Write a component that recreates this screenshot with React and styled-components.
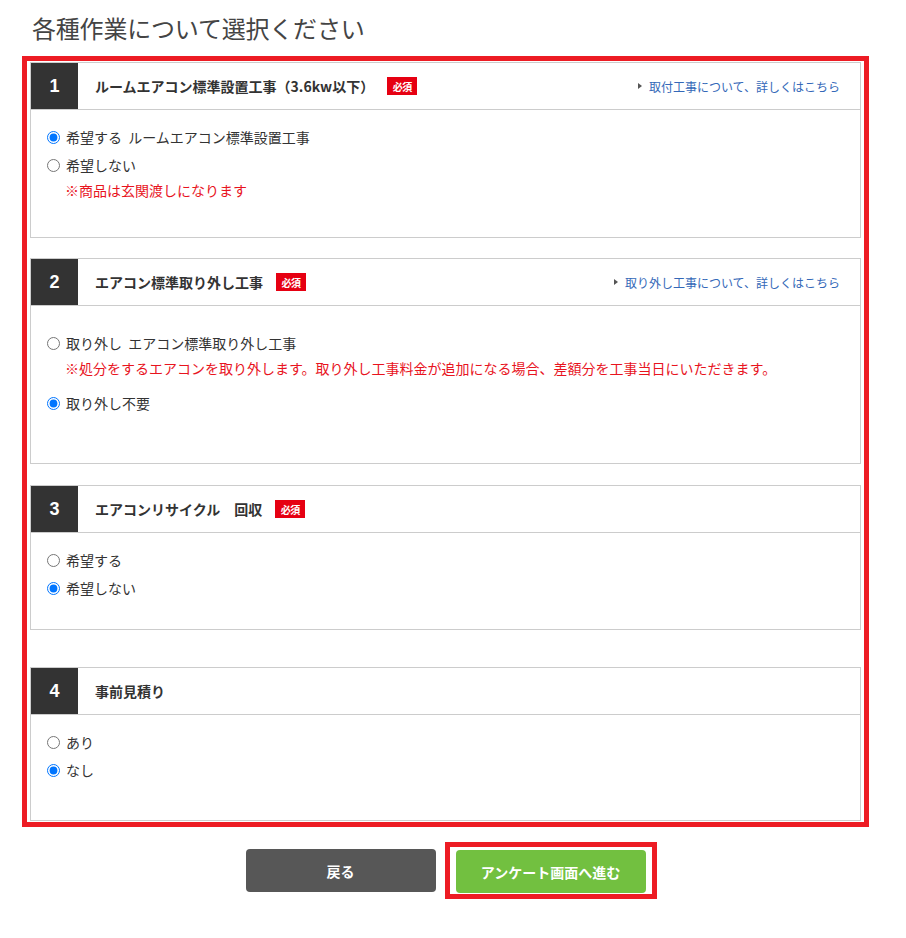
import React from "react";
import styled, { createGlobalStyle } from "styled-components";

const GlobalStyle = createGlobalStyle`
  html, body { margin: 0; padding: 0; background: #fff; }
  body {
    font-family: "Noto Sans CJK JP", "Noto Sans", sans-serif;
    color: #333;
  }
`;

const Page = styled.div`
  width: 906px;
  padding: 12px 0 20px;
  box-sizing: border-box;
`;

const Title = styled.h1`
  margin: 0 0 12px 32px;
  font-size: 24px;
  line-height: 32px;
  font-weight: 400;
  color: #444;
  letter-spacing: -0.2px;
`;

const Highlight = styled.div`
  margin-left: 22px;
  width: 847px;
  box-sizing: border-box;
  border: 5px solid #ed1c24;
  padding: 1px 3px 1px 3px;
`;

const Card = styled.section`
  border: 1px solid #ccc;
  margin-top: ${(p) => p.$mt}px;
  background: #fff;
`;

const Header = styled.div`
  display: flex;
  align-items: center;
  height: 46px;
  border-bottom: 1px solid #ccc;
`;

const Num = styled.div`
  width: 47px;
  height: 46px;
  background: #333;
  color: #fff;
  font-family: "Liberation Sans", Arial, sans-serif;
  font-weight: 700;
  font-size: 18px;
  display: flex;
  align-items: center;
  justify-content: center;
`;

const HeadTitle = styled.div`
  margin-left: 17px;
  font-size: 14px;
  font-weight: 700;
  color: #333;
  white-space: pre;
`;

const Badge = styled.span`
  margin-left: 13px;
  width: 30px;
  height: 18px;
  background: #e60012;
  color: #fff;
  font-size: 10px;
  font-weight: 700;
  display: inline-flex;
  align-items: center;
  justify-content: center;
  letter-spacing: -0.5px;
`;

const Link = styled.a`
  margin-left: auto;
  margin-right: 20px;
  display: flex;
  align-items: center;
  gap: 7px;
  font-size: 12px;
  color: #3468b8;
  text-decoration: none;
  &::before {
    content: "";
    width: 0;
    height: 0;
    border-top: 3px solid transparent;
    border-bottom: 3px solid transparent;
    border-left: 4px solid #555;
  }
`;

const Body = styled.div`
  padding: ${(p) => p.$pt}px 16px ${(p) => p.$pb}px;
`;

const Option = styled.label`
  display: flex;
  align-items: center;
  height: 28px;
  font-size: 14px;
  color: #333;
  white-space: pre;
`;

const Radio = styled.input`
  width: 13px;
  height: 13px;
  margin: 0 6px 0 0;
  accent-color: #0075ff;
`;

const Note = styled.div`
  padding-left: 18px;
  font-size: 14px;
  line-height: 22px;
  color: #e8141e;
  margin-bottom: 10px;
`;

const Actions = styled.div`
  margin-top: 15px;
  display: flex;
  justify-content: center;
  align-items: center;
  gap: 9px;
  padding-right: 4px;
`;

const Button = styled.button`
  width: 190px;
  height: 43px;
  border: none;
  border-radius: 4px;
  background: ${(p) => p.$bg};
  color: #fff;
  font-family: "Noto Sans CJK JP", sans-serif;
  font-size: 14px;
  font-weight: 700;
  cursor: pointer;
`;

const Outline = styled.div`
  border: 5px solid #ed1c24;
  padding: 3px 6px 1px 6px;
  display: flex;
`;

const cards = [
  {
    num: "1",
    title: "ルームエアコン標準設置工事（3.6kw以下）",
    required: true,
    link: "取付工事について、詳しくはこちら",
    mt: 0,
    pt: 13,
    pb: 26,
    options: [
      { label: "希望する  ルームエアコン標準設置工事", checked: true },
      { label: "希望しない", note: "※商品は玄関渡しになります" },
    ],
  },
  {
    num: "2",
    title: "エアコン標準取り外し工事",
    required: true,
    link: "取り外し工事について、詳しくはこちら",
    mt: 20,
    pt: 23,
    pb: 46,
    options: [
      {
        label: "取り外し  エアコン標準取り外し工事",
        note: "※処分をするエアコンを取り外します。取り外し工事料金が追加になる場合、差額分を工事当日にいただきます。",
      },
      { label: "取り外し不要", checked: true },
    ],
  },
  {
    num: "3",
    title: "エアコンリサイクル　回収",
    required: true,
    mt: 21,
    pt: 13,
    pb: 27,
    options: [{ label: "希望する" }, { label: "希望しない", checked: true }],
  },
  {
    num: "4",
    title: "事前見積り",
    mt: 37,
    pt: 13,
    pb: 36,
    options: [{ label: "あり" }, { label: "なし", checked: true }],
  },
];

export default function App() {
  return (
    <Page>
      <GlobalStyle />
      <Title>各種作業について選択ください</Title>
      <Highlight>
        {cards.map((c) => (
          <Card key={c.num} $mt={c.mt}>
            <Header>
              <Num>{c.num}</Num>
              <HeadTitle>{c.title}</HeadTitle>
              {c.required && <Badge>必須</Badge>}
              {c.link && <Link href="#">{c.link}</Link>}
            </Header>
            <Body $pt={c.pt} $pb={c.pb}>
              {c.options.map((o, i) => (
                <React.Fragment key={i}>
                  <Option>
                    <Radio
                      type="radio"
                      name={"q" + c.num}
                      defaultChecked={!!o.checked}
                    />
                    {o.label}
                  </Option>
                  {o.note && <Note>{o.note}</Note>}
                </React.Fragment>
              ))}
            </Body>
          </Card>
        ))}
      </Highlight>
      <Actions>
        <Button $bg="#575757">戻る</Button>
        <Outline>
          <Button $bg="#72c040">アンケート画面へ進む</Button>
        </Outline>
      </Actions>
    </Page>
  );
}
